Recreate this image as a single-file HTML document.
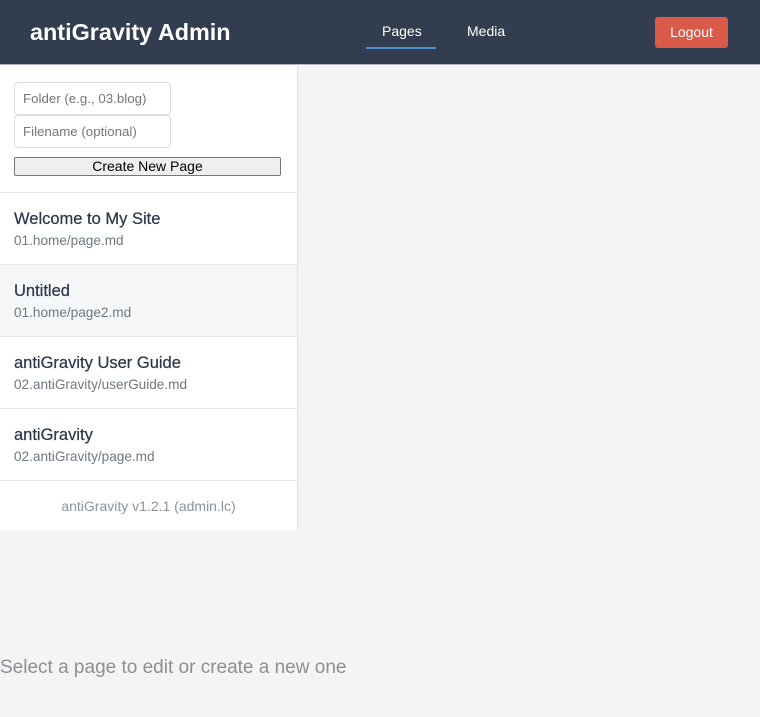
<!DOCTYPE html>
<html><head><style>
*{box-sizing:border-box;margin:0;padding:0}
body{width:760px;height:717px;background:#f4f4f4;font-family:"Liberation Sans",sans-serif;position:relative;overflow:hidden}
.hdr{position:absolute;left:0;top:0;width:760px;height:65px;background:#323e50;border-bottom:1px solid #b5b9bf}
.title{position:absolute;left:30px;top:19px;color:#fff;font-weight:bold;font-size:23.4px}
.nav{position:absolute;top:23px;color:#fff;font-size:14px}
.ul{position:absolute;left:366px;top:47px;width:70px;height:2px;background:#4a90d9}
.logout{position:absolute;left:655px;top:17px;width:73px;height:31px;background:#d95a49;border-radius:3px;color:#fff;font-size:14px;text-align:center;line-height:31px}
.side{position:absolute;left:0;top:66px;width:298px;height:464px;background:#fff;border-right:1px solid #e2e2e2}
.inp{position:absolute;left:14px;width:157px;height:33px;border:1px solid #ddd;border-radius:4px;color:#757575;font-size:13.3px;padding-left:8px;line-height:31px}
.btn{position:absolute;left:14px;top:91px;width:267px;height:19px;background:#efefef;border:1px solid #767676;border-radius:2px;font-size:14px;text-align:center;line-height:17px;color:#000}
.item{position:absolute;left:0;width:297px;height:72px;border-top:1px solid #e8e8e8;padding:17px 14px}
.item b{display:block;font-weight:normal;font-size:16.5px;color:#2c3a4b;-webkit-text-stroke:0.25px #2c3a4b}
.item span{display:block;font-size:13.6px;color:#6f7880;margin-top:4px}
.foot{position:absolute;left:0;top:414px;width:297px;height:50px;border-top:1px solid #e8e8e8;text-align:center;font-size:14px;color:#8a949c;line-height:50px}
.msg{position:absolute;left:0;top:657px;font-size:19px;color:#8a9096}
</style></head><body>
<div class="hdr">
<div class="title">antiGravity Admin</div>
<div class="nav" style="left:382px">Pages</div>
<div class="nav" style="left:467px">Media</div>
<div class="ul"></div>
<div class="logout">Logout</div>
</div>
<div class="side">
<div class="inp" style="top:16px">Folder (e.g., 03.blog)</div>
<div class="inp" style="top:49px">Filename (optional)</div>
<div class="btn">Create New Page</div>
<div class="item" style="top:126px"><b>Welcome to My Site</b><span>01.home/page.md</span></div>
<div class="item" style="top:198px;background:#f6f7f9"><b>Untitled</b><span>01.home/page2.md</span></div>
<div class="item" style="top:270px"><b>antiGravity User Guide</b><span>02.antiGravity/userGuide.md</span></div>
<div class="item" style="top:342px"><b>antiGravity</b><span>02.antiGravity/page.md</span></div>
<div class="foot">antiGravity v1.2.1 (admin.lc)</div>
</div>
<div class="msg">Select a page to edit or create a new one</div>
</body></html>
